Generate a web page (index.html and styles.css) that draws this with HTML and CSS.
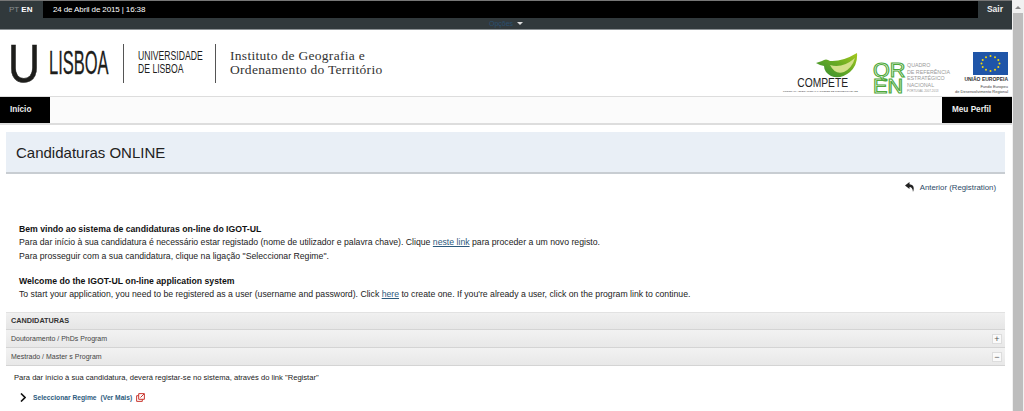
FILE: index.html
```html
<!DOCTYPE html>
<html lang="pt">
<head>
  <meta charset="UTF-8">
  <title>Candidaturas ONLINE</title>
  <link rel="stylesheet" href="styles.css">
</head>
<body>
  <div class="page">
    <div class="topbar">
      <div class="lang"><span class="lang-off">PT</span> <b>EN</b></div>
      <div class="date">24 de Abril de 2015 | 16:38</div>
      <a class="logout">Sair</a>
    </div>
    <div class="subbar"><span class="subbar-label">Opções</span><span class="caret"></span></div>

    <div class="header">
      <div class="brand">
        <span class="brand-u">U</span>
        <span class="brand-lisboa">LISBOA</span>
        <span class="brand-sep"></span>
        <span class="brand-uni">UNIVERSIDADE<br>DE LISBOA</span>
        <span class="brand-sep"></span>
        <span class="brand-inst">Instituto de Geografia e<br>Ordenamento do Território</span>
      </div>
      <div class="partners">
        <div class="compete">
          <svg class="bird" width="42" height="26" viewBox="0 0 42 26">
            <defs>
              <linearGradient id="wing" x1="0" y1="1" x2="1" y2="0">
                <stop offset="0" stop-color="#2f8a34"/>
                <stop offset="0.6" stop-color="#6fae22"/>
                <stop offset="1" stop-color="#a6c91e"/>
              </linearGradient>
            </defs>
            <path d="M0 10 L6 8 Q10 5 14 8 Q26 9 41 0 Q42 12 34 19 Q24 27 15 23 Q8 19 8 13 L4 12 Z" fill="url(#wing)"/>
            <path d="M14 12 Q26 16 39 5 Q36 15 28 19 Q19 22 14 12 Z" fill="#d3e08a"/>
          </svg>
          <div class="compete-name">COMPETE</div>
          <div class="compete-sub">PROGRAMA OPERACIONAL FACTORES DE COMPETITIVIDADE</div>
        </div>
        <div class="qren">
          <div class="qren-mark">QR<br>EN</div>
          <div class="qren-text">QUADRO<br>DE REFERÊNCIA<br>ESTRATÉGICO<br>NACIONAL<small>PORTUGAL 2007-2013</small></div>
        </div>
        <div class="eu">
          <svg class="eu-flag" width="35" height="23" viewBox="0 0 35 23">
            <rect width="35" height="23" fill="#1f55a8"/>
            <g fill="#f5d90a">
              <circle cx="17.5" cy="4" r="1"/><circle cx="22" cy="5.2" r="1"/><circle cx="25.3" cy="8" r="1"/>
              <circle cx="26.5" cy="11.5" r="1"/><circle cx="25.3" cy="15" r="1"/><circle cx="22" cy="17.8" r="1"/>
              <circle cx="17.5" cy="19" r="1"/><circle cx="13" cy="17.8" r="1"/><circle cx="9.7" cy="15" r="1"/>
              <circle cx="8.5" cy="11.5" r="1"/><circle cx="9.7" cy="8" r="1"/><circle cx="13" cy="5.2" r="1"/>
            </g>
          </svg>
          <div class="eu-name">UNIÃO EUROPEIA</div>
          <div class="eu-sub">Fundo Europeu<br>de Desenvolvimento Regional</div>
        </div>
      </div>
    </div>

    <div class="nav">
      <a class="nav-item">Início</a>
      <a class="nav-item nav-profile">Meu Perfil</a>
    </div>

    <div class="title-band"><h1>Candidaturas ONLINE</h1></div>

    <div class="back-row">
      <svg width="10" height="10" viewBox="0 0 10 10"><path d="M4.5 0 L0 3.6 L4.5 7 V4.9 Q7.5 4.9 8 10 Q10.5 3 4.5 2.3 Z" fill="#222"/></svg>
      <a class="back-link">Anterior (Registration)</a>
    </div>

    <div class="intro">
      <p><b>Bem vindo ao sistema de candidaturas on-line do IGOT-UL</b><br>
      Para dar início à sua candidatura é necessário estar registado (nome de utilizador e palavra chave). Clique <a>neste link</a> para proceder a um novo registo.<br>
      Para prosseguir com a sua candidatura, clique na ligação "Seleccionar Regime".</p>
      <p><b>Welcome do the IGOT-UL on-line application system</b><br>
      To start your application, you need to be registered as a user (username and password). Click <a>here</a> to create one. If you're already a user, click on the program link to continue.</p>
    </div>

    <div class="panel">
      <div class="panel-head">CANDIDATURAS</div>
      <div class="panel-row"><span>Doutoramento / PhDs Program</span><span class="toggle">+</span></div>
      <div class="panel-row"><span>Mestrado / Master s Program</span><span class="toggle">−</span></div>
      <div class="panel-body">
        <p>Para dar início à sua candidatura, deverá registar-se no sistema, através do link "Registar"</p>
        <div class="regime">
          <svg width="6" height="9" viewBox="0 0 6 9"><path d="M1 0.5 L5 4.5 L1 8.5" fill="none" stroke="#111" stroke-width="1.6"/></svg>
          <a>Seleccionar Regime</a><a>(Ver Mais)</a>
          <svg width="9" height="9" viewBox="0 0 10 10"><path d="M3 3 H0.7 V9.3 H7 V7 M3 0.7 H9.3 V7 H3 Z M5 5 L9 1" fill="none" stroke="#c8332b" stroke-width="1.1"/></svg>
        </div>
      </div>
    </div>
  </div>
  <div class="scrollbar"><span class="scroll-up"></span><span class="scroll-thumb"></span></div>
</body>
</html>
```

FILE: styles.css
```css
html, body {
  height: 100%;
}
body {
  margin: 0;
  overflow: hidden;
  font-family: "Liberation Sans", Arial, sans-serif;
  font-size: 9px;
  color: #222;
  background: #fff;
}
.page {
  width: 1012px;
  height: 411px;
  overflow: hidden;
}
a {
  color: #2c5a7d;
}

/* barra de topo */
.topbar {
  display: flex;
  align-items: center;
  height: 18px;
  box-sizing: border-box;
  border-top: 1px solid #777;
  background: #000;
  color: #fff;
  font-size: 8px;
}
.lang {
  width: 43px;
  height: 17px;
  line-height: 17px;
  padding-left: 9px;
  box-sizing: border-box;
  background: #31393c;
}
.lang-off {
  color: #8a9092;
}
.date {
  margin-left: 10px;
  flex: 1;
  letter-spacing: -0.12px;
}
.logout {
  width: 34px;
  height: 17px;
  line-height: 17px;
  text-align: center;
  font-size: 8.5px;
  font-weight: bold;
  color: #eee;
  background: #31393c;
}
.subbar {
  display: flex;
  align-items: center;
  justify-content: center;
  gap: 4px;
  height: 12px;
  background: #31393c;
  border-bottom: 1px solid #8b9194;
  box-sizing: border-box;
}
.subbar-label {
  font-size: 7px;
  color: #2b5070;
}
.caret {
  border-left: 3px solid transparent;
  border-right: 3px solid transparent;
  border-top: 3px solid #ddd;
}

/* cabecalho */
.header {
  display: flex;
  justify-content: space-between;
  height: 66px;
}
.brand {
  display: flex;
  align-items: center;
  height: 66px;
  padding-left: 8px;
  color: #1d1d1b;
}
.brand-u {
  width: 28px;
  font-size: 54px;
  line-height: 54px;
  -webkit-text-stroke: 0.6px #1d1d1b;
  transform: scaleX(0.82);
  transform-origin: left center;
}
.brand-lisboa {
  width: 59px;
  margin: 0 15px 0 13px;
  font-size: 33px;
  white-space: nowrap;
  -webkit-text-stroke: 0.3px #1d1d1b;
  transform: scaleX(0.5);
  transform-origin: left center;
}
.brand-sep {
  width: 1px;
  height: 39px;
  background: #555;
}
.brand-uni {
  width: 64px;
  margin: 0 13px 0 14px;
  font-size: 12.5px;
  line-height: 13px;
  white-space: nowrap;
  transform: scaleX(0.69);
  transform-origin: left center;
}
.brand-inst {
  margin-left: 14px;
  font-family: "Liberation Serif", serif;
  font-size: 13.5px;
  line-height: 14px;
  letter-spacing: 0.3px;
  color: #333;
}
.partners {
  display: flex;
  align-items: flex-start;
  padding-right: 4px;
}
.compete {
  position: relative;
  width: 75px;
  padding-top: 48px;
  text-align: right;
}
.bird {
  position: absolute;
  top: 23px;
  right: 0;
}
.compete-name {
  margin-right: 10px;
  font-size: 12.5px;
  line-height: 11px;
  color: #222;
  transform: scaleX(0.82);
  transform-origin: right center;
}
.compete-sub {
  font-size: 2.5px;
  white-space: nowrap;
  line-height: 5px;
  color: #444;
}
.qren {
  display: flex;
  width: 77px;
  margin-left: 15px;
  padding-top: 32px;
}
.qren-mark {
  width: 35px;
  font-size: 20px;
  line-height: 16px;
  color: transparent;
  -webkit-text-stroke: 1.1px #4ea93a;
  transform: scaleX(1.08);
  transform-origin: left center;
}
.qren-text {
  font-size: 5.3px;
  line-height: 6.7px;
  color: #999;
  white-space: nowrap;
}
.qren-text small {
  display: block;
  font-size: 3px;
  line-height: 5px;
}
.eu {
  width: 53px;
  margin-left: 5px;
  padding-top: 22px;
  text-align: right;
}
.eu-flag {
  display: block;
  margin-left: auto;
}
.eu-name {
  margin-top: 1px;
  font-size: 5px;
  line-height: 6px;
  font-weight: bold;
  color: #333;
}
.eu-sub {
  margin-top: 2px;
  font-size: 4px;
  line-height: 5px;
  color: #444;
  white-space: nowrap;
}

/* menu */
.nav {
  display: flex;
  justify-content: space-between;
  height: 29px;
  box-sizing: border-box;
  background: #fbfbfb;
  border-top: 1px solid #ddd;
  border-bottom: 2px solid #ddd;
}
.nav-item {
  width: 50px;
  padding-left: 10px;
  box-sizing: border-box;
  line-height: 26px;
  font-size: 8.2px;
  background: #000;
  color: #eee;
  font-weight: bold;
}
.nav-profile {
  width: 70px;
  padding-left: 10px;
}

/* titulo */
.title-band {
  display: flex;
  align-items: center;
  height: 42px;
  margin: 7px 7px 0 6px;
  padding-left: 10px;
  box-sizing: border-box;
  background: #e9eff6;
  border-bottom: 2px solid #c8cdd2;
}
h1 {
  margin: 0;
  font-size: 15px;
  font-weight: normal;
  color: #222;
}
.back-row {
  display: flex;
  align-items: center;
  justify-content: flex-end;
  gap: 5px;
  height: 10px;
  margin: 8px 16px 0 0;
}
.back-link {
  font-size: 7.8px;
  color: #2c4a66;
}

/* texto de entrada */
.intro {
  margin: 31px 0 0 19px;
  font-size: 8.7px;
  line-height: 13.3px;
  white-space: nowrap;
}
.intro p {
  margin: 0 0 12px;
}
.intro p:last-child {
  margin-bottom: 11px;
}
.intro b {
  color: #111;
}
.intro a {
  text-decoration: underline;
}

/* painel */
.panel {
  margin: 0 7px 0 6px;
}
.panel-head {
  height: 16px;
  line-height: 16px;
  padding-left: 5px;
  font-size: 7.3px;
  font-weight: bold;
  color: #333;
  background: linear-gradient(#f0f0f0, #e6e6e6);
  border-top: 1px solid #e2e2e2;
}
.panel-row {
  display: flex;
  justify-content: space-between;
  align-items: center;
  height: 17px;
  padding: 0 3px 0 5px;
  font-size: 7px;
  color: #444;
  background: linear-gradient(#f2f2f2, #e8e8e8);
  border-top: 1px solid #d4d4d4;
}
.toggle {
  width: 8px;
  height: 8px;
  line-height: 8px;
  text-align: center;
  font-size: 9px;
  color: #555;
  background: #fafafa;
  border: 1px solid #ddd;
}
.panel-body {
  padding: 7px 8px;
  border-top: 1px solid #d4d4d4;
  font-size: 7.6px;
}
.panel-body p {
  margin: 0 0 11px;
}
.regime {
  display: flex;
  align-items: center;
  padding-left: 6px;
  gap: 4px;
  font-size: 6.7px;
  font-weight: bold;
}
.regime svg:first-child {
  margin-right: 3px;
}

/* barra de scroll */
.scrollbar {
  position: absolute;
  top: 0;
  right: 0;
  width: 12px;
  height: 411px;
  background: #f1f1f1;
}
.scroll-up {
  position: absolute;
  top: 6px;
  left: 3px;
  border-left: 3px solid transparent;
  border-right: 3px solid transparent;
  border-bottom: 3px solid #888;
}
.scroll-thumb {
  position: absolute;
  top: 13px;
  left: 1px;
  width: 10px;
  height: 398px;
  background: #bdbdbd;
}
```
